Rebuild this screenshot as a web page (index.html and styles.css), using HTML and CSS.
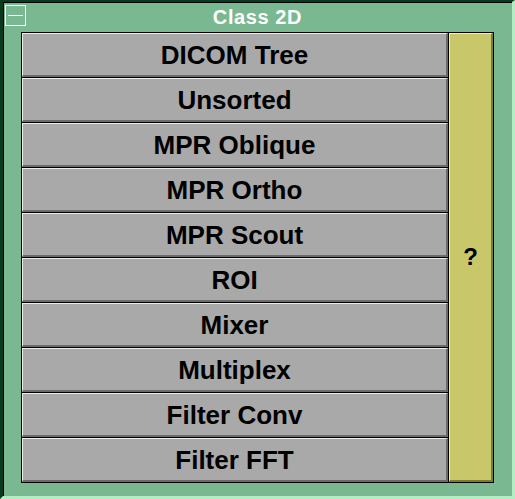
FILE: index.html
```html
<!DOCTYPE html>
<html>
<head>
<meta charset="utf-8">
<link rel="stylesheet" href="styles.css">
</head>
<body>
<div class="window">
  <div class="titlebar">
    <div class="sysbox"><span class="sysline"></span></div>
    <div class="title">Class 2D</div>
    <div></div>
  </div>
  <div class="panel">
    <div class="buttons">
      <div class="btn">DICOM Tree</div>
      <div class="btn">Unsorted</div>
      <div class="btn">MPR Oblique</div>
      <div class="btn">MPR Ortho</div>
      <div class="btn">MPR Scout</div>
      <div class="btn">ROI</div>
      <div class="btn">Mixer</div>
      <div class="btn">Multiplex</div>
      <div class="btn">Filter Conv</div>
      <div class="btn">Filter FFT</div>
    </div>
    <div class="help">?</div>
  </div>
</div>
</body>
</html>
```

FILE: styles.css
```css
html, body {
  margin: 0;
  padding: 0;
}
body {
  width: 515px;
  height: 499px;
  font-family: "Liberation Sans", Arial, sans-serif;
  font-weight: bold;
}
.window {
  box-sizing: border-box;
  width: 515px;
  height: 499px;
  background: #7ab891;
  border-top: 2px solid #0a3a1e;
  border-left: 3px solid #0a3a1e;
  border-right: 3px solid #b4ecc4;
  border-bottom: 3px solid #b4ecc4;
  box-shadow: inset 1px 1px 0 #000;
}
.titlebar {
  height: 30px;
  display: grid;
  grid-template-columns: 1fr auto 1fr;
  align-items: start;
}
.sysbox {
  box-sizing: border-box;
  width: 21px;
  height: 21px;
  margin: 3px 0 0 2px;
  border: 1px solid #ffffff;
  display: flex;
  align-items: center;
  justify-content: center;
}
.sysline {
  width: 15px;
  height: 1px;
  background: #ffffff;
}
.title {
  color: #ffffff;
  font-size: 20px;
  letter-spacing: 0.6px;
  line-height: 30px;
}
.panel {
  margin-left: 18px;
  width: 473px;
  height: 451px;
  box-sizing: border-box;
  background: #000;
  padding: 1px;
  display: grid;
  grid-template-columns: 426px 44px;
  gap: 1px;
}
.buttons {
  display: flex;
  flex-direction: column;
  gap: 1px;
}
.btn {
  box-sizing: border-box;
  height: 44px;
  background: #a9a9a9;
  border-top: 1px solid #ececec;
  border-left: 1px solid #ececec;
  border-right: 2px solid #6b6b6b;
  border-bottom: 2px solid #6b6b6b;
  display: flex;
  align-items: center;
  justify-content: center;
  font-size: 26px;
  line-height: 30px;
  color: #000;
}
.help {
  box-sizing: border-box;
  background: #c8c86a;
  border-top: 1px solid #f4f4a4;
  border-left: 1px solid #f4f4a4;
  border-right: 2px solid #7c7c30;
  border-bottom: 2px solid #7c7c30;
  display: flex;
  align-items: center;
  justify-content: center;
  font-size: 24px;
  color: #000;
}
```
